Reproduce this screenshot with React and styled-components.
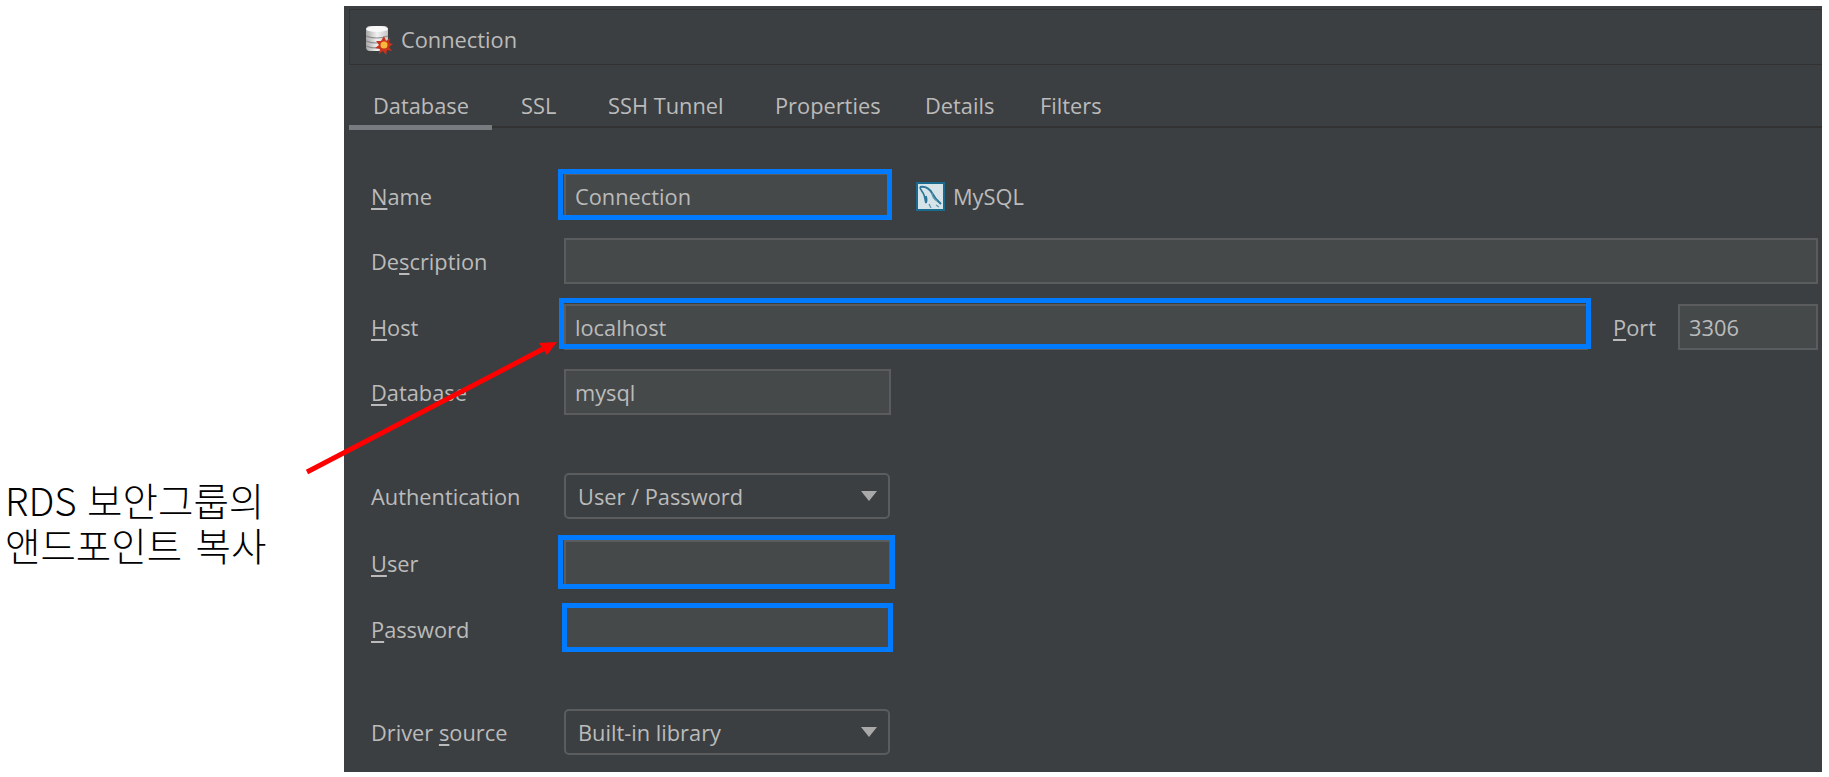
import React from "react";
import styled, { createGlobalStyle } from "styled-components";

const Global = createGlobalStyle`
  html, body { margin: 0; padding: 0; background: #fff; }
  body { font-family: "Open Sans", "Noto Sans", sans-serif; }
`;

const Page = styled.div`
  position: relative;
  display: flex;
  box-sizing: border-box;
  width: 1829px;
  height: 777px;
  padding: 0 7px 5px 0;
  overflow: hidden;
`;

const Annotation = styled.div`
  box-sizing: border-box;
  width: 344px;
  flex: none;
  padding: 477px 0 0 5px;
  color: #000;
  font-family: "Noto Sans CJK KR", "Noto Sans", sans-serif;
  font-size: 38.5px;
  font-weight: 300;
  line-height: 45px;
  white-space: nowrap;
`;

const NoteLine = styled.div`
  word-spacing: ${(p) => p.$ws}px;
`;

const Panel = styled.section`
  flex: 1;
  margin-top: 6px;
  padding: 3px 0 0 5px;
  background: #3c3f41;
  color: #bbbbbb;
  font-size: 21.8px;
  overflow: hidden;
`;

const TitleBar = styled.header`
  display: flex;
  align-items: center;
  gap: 8px;
  box-sizing: border-box;
  height: 56px;
  padding: 5px 0 0 16px;
  border: 1px solid #323232;
  border-right: 0;
`;

const TabStrip = styled.nav`
  display: flex;
  box-sizing: border-box;
  align-items: flex-end;
  height: 63px;
  margin-bottom: 45px;
  border-bottom: 2px solid #323232;
`;

const Tab = styled.div`
  position: relative;
  flex: none;
  box-sizing: border-box;
  width: ${(p) => p.$w}px;
  height: 44px;
  margin-left: ${(p) => p.$gap || 0}px;
  padding-left: ${(p) => (p.$active ? 24 : 0)}px;
  line-height: 48px;
  white-space: nowrap;
  ${(p) => p.$active && `
    &::after {
      content: "";
      position: absolute;
      left: 0;
      right: 0;
      bottom: -4px;
      height: 5px;
      background: #787c80;
    }
  `}
`;

const Row = styled.div`
  display: flex;
  align-items: center;
  height: 46px;
  margin-top: ${(p) => p.$top || 0}px;
`;

const Label = styled.label`
  box-sizing: border-box;
  width: 215px;
  flex: none;
  padding-left: 22px;
  white-space: nowrap;
`;

const Key = styled.span`
  text-decoration: underline;
  text-decoration-thickness: 2px;
  text-underline-offset: 3px;
`;

const Field = styled.div`
  position: relative;
  box-sizing: border-box;
  height: 46px;
  width: ${(p) => (p.$w ? `${p.$w}px` : "auto")};
  flex: ${(p) => (p.$w ? "none" : "1")};
  margin-right: ${(p) => p.$mr || 0}px;
  padding-left: 9px;
  line-height: 44px;
  background: #45494a;
  border: 2px solid #5a5c5d;
  white-space: nowrap;
`;

const Highlight = styled.span`
  position: absolute;
  top: ${(p) => p.$t}px;
  right: ${(p) => p.$r}px;
  bottom: ${(p) => p.$b}px;
  left: ${(p) => p.$l}px;
  border: 5px solid #007bff;
  pointer-events: none;
`;

const Select = styled.div`
  display: flex;
  align-items: center;
  justify-content: space-between;
  box-sizing: border-box;
  width: 326px;
  height: 46px;
  padding: 0 11px 0 12px;
  border: 2px solid #5a5c5d;
  border-radius: 5px;
  white-space: nowrap;
`;

const Caret = styled.span`
  width: 0;
  height: 0;
  border-left: 8px solid transparent;
  border-right: 8px solid transparent;
  border-top: 10px solid #a9a9a9;
`;

const Driver = styled.div`
  display: flex;
  align-items: center;
  gap: 8px;
  margin-left: 25px;
`;

const PortLabel = styled.label`
  flex: none;
  width: 65px;
  margin-left: 25px;
`;

const ArrowOverlay = styled.svg`
  position: absolute;
  top: 0;
  left: 0;
  pointer-events: none;
`;

const DbIcon = () => (
  <svg width="27" height="30" viewBox="0 0 27 30">
    <defs>
      <linearGradient id="can" x1="0" x2="1" y1="0" y2="0">
        <stop offset="0" stopColor="#a8a8a8" />
        <stop offset="0.5" stopColor="#f1f1f1" />
        <stop offset="1" stopColor="#c4c4c4" />
      </linearGradient>
    </defs>
    <rect x="0" y="1" width="22" height="25" rx="4" fill="url(#can)" />
    <ellipse cx="11" cy="4" rx="11" ry="3" fill="#f8f8f8" />
    <path d="M0 11q11 4 22 0M0 16q11 4 22 0M0 21q11 4 22 0" stroke="#8a8a8a" strokeWidth="1.2" fill="none" />
    <path d="M18 11l2 5 4-3-1 5 4 1-4 3 3 4-5-1-1 5-3-4-4 3 1-5-5-1 4-3-3-4 5 0z" fill="#c7341b" />
    <circle cx="18" cy="20" r="3.5" fill="#f6b73c" />
  </svg>
);

const MysqlIcon = () => (
  <svg width="29" height="29" viewBox="0 0 29 29">
    <rect x="1" y="1" width="27" height="27" fill="#d6e4ea" stroke="#1b6b8f" strokeWidth="2" />
    <path d="M4 5c5-1 9 1 12 6 2 4 4 7 9 11" stroke="#2b7598" strokeWidth="2" fill="none" />
    <path d="M4 5c0 3 3 5 4 8 1 3 1 5 2 8M10 21c1-2 1-4 0-7" stroke="#2b7598" strokeWidth="1.6" fill="none" />
    <path d="M16 11c0 3 2 6 5 8M13 22l2 4M20 23l3 2" stroke="#5f97b0" strokeWidth="1.3" fill="none" />
  </svg>
);

export default function App() {
  return (
    <Page>
      <Global />
      <Annotation>
        <NoteLine $ws={2}>RDS 보안그룹의</NoteLine>
        <NoteLine $ws={5}>앤드포인트 복사</NoteLine>
      </Annotation>
      <Panel>
        <TitleBar>
          <DbIcon />
          Connection
        </TitleBar>
        <TabStrip>
          <Tab $active $w={143}>Database</Tab>
          <Tab $gap={29} $w={87}>SSL</Tab>
          <Tab $w={167}>SSH Tunnel</Tab>
          <Tab $w={150}>Properties</Tab>
          <Tab $w={115}>Details</Tab>
          <Tab $w={80}>Filters</Tab>
        </TabStrip>
        <Row>
          <Label><Key>N</Key>ame</Label>
          <Field $w={327}>
            Connection
            <Highlight $t={-6} $r={-3} $b={-3} $l={-8} />
          </Field>
          <Driver>
            <MysqlIcon />
            MySQL
          </Driver>
        </Row>
        <Row $top={19}>
          <Label>De<Key>s</Key>cription</Label>
          <Field $mr={4} />
        </Row>
        <Row $top={20}>
          <Label><Key>H</Key>ost</Label>
          <Field $w={1024}>
            localhost
            <Highlight $t={-8} $r={-5} $b={-1} $l={-7} />
          </Field>
          <PortLabel><Key>P</Key>ort</PortLabel>
          <Field $w={140}>3306</Field>
        </Row>
        <Row $top={19}>
          <Label><Key>D</Key>atabase</Label>
          <Field $w={327}>mysql</Field>
        </Row>
        <Row $top={58}>
          <Label>Authentication</Label>
          <Select>
            User / Password
            <Caret />
          </Select>
        </Row>
        <Row $top={21}>
          <Label><Key>U</Key>ser</Label>
          <Field $w={327}>
            <Highlight $t={-7} $r={-6} $b={-5} $l={-8} />
          </Field>
        </Row>
        <Row $top={20}>
          <Label><Key>P</Key>assword</Label>
          <Field $w={327}>
            <Highlight $t={-5} $r={-4} $b={-2} $l={-4} />
          </Field>
        </Row>
        <Row $top={57}>
          <Label>Driver <Key>s</Key>ource</Label>
          <Select>
            Built-in library
            <Caret />
          </Select>
        </Row>
      </Panel>
      <ArrowOverlay width="1829" height="777" viewBox="0 0 1829 777">
        <path d="M307 472L543 349" stroke="#ff0000" strokeWidth="5" fill="none" />
        <path d="M557 342L539 343L547 355Z" fill="#ff0000" />
      </ArrowOverlay>
    </Page>
  );
}
